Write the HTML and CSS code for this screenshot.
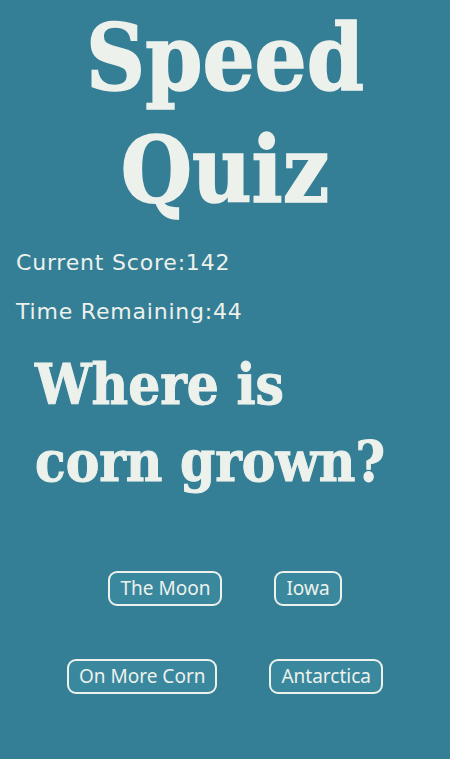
FILE: index.html
```html
<!DOCTYPE html>
<html>
<head>
<meta charset="utf-8">
<link rel="stylesheet" href="styles.css">
</head>
<body>
<h1 class="title">Speed<br>Quiz</h1>
<p class="stat">Current Score:142</p>
<p class="stat">Time Remaining:44</p>
<h2 class="question">Where is corn grown?</h2>
<div class="answers">
  <div class="row">
    <button class="answer">The Moon</button>
    <button class="answer">Iowa</button>
  </div>
  <div class="row">
    <button class="answer">On More Corn</button>
    <button class="answer">Antarctica</button>
  </div>
</div>
</body>
</html>
```
FILE: styles.css
```css
html, body {
  margin: 0;
  background: #347f96;
  color: #edf1ec;
}
body {
  width: 450px;
  height: 759px;
  overflow: hidden;
}
.title {
  margin: 0;
  padding-top: 2px;
  text-align: center;
  font-family: "DejaVu Serif Condensed", "DejaVu Serif", serif;
  font-stretch: condensed;
  font-weight: bold;
  font-size: 91px;
  line-height: 112px;
  -webkit-text-stroke: 1.5px #edf1ec;
}
.stat {
  margin: 0 0 0 16px;
  font-family: "DejaVu Sans", sans-serif;
  font-size: 22px;
  letter-spacing: 0.8px;
  line-height: 49px;
}
.stat:first-of-type {
  margin-top: 12px;
}
.question {
  margin: 10px 0 0 35px;
  width: 380px;
  font-family: "DejaVu Serif Condensed", "DejaVu Serif", serif;
  font-stretch: condensed;
  font-weight: bold;
  font-size: 56px;
  line-height: 77px;
  -webkit-text-stroke: 1px #edf1ec;
}
.answers {
  margin-top: 71px;
  display: flex;
  flex-direction: column;
  gap: 53px;
}
.row {
  display: flex;
  justify-content: center;
  gap: 52px;
}
.answer {
  background: #3a889e;
  color: #edf1ec;
  border: 2px solid #edf1ec;
  border-radius: 9px;
  padding: 5px 10px;
  font-family: "Noto Sans", sans-serif;
  font-size: 19px;
  line-height: 21px;
}
```
